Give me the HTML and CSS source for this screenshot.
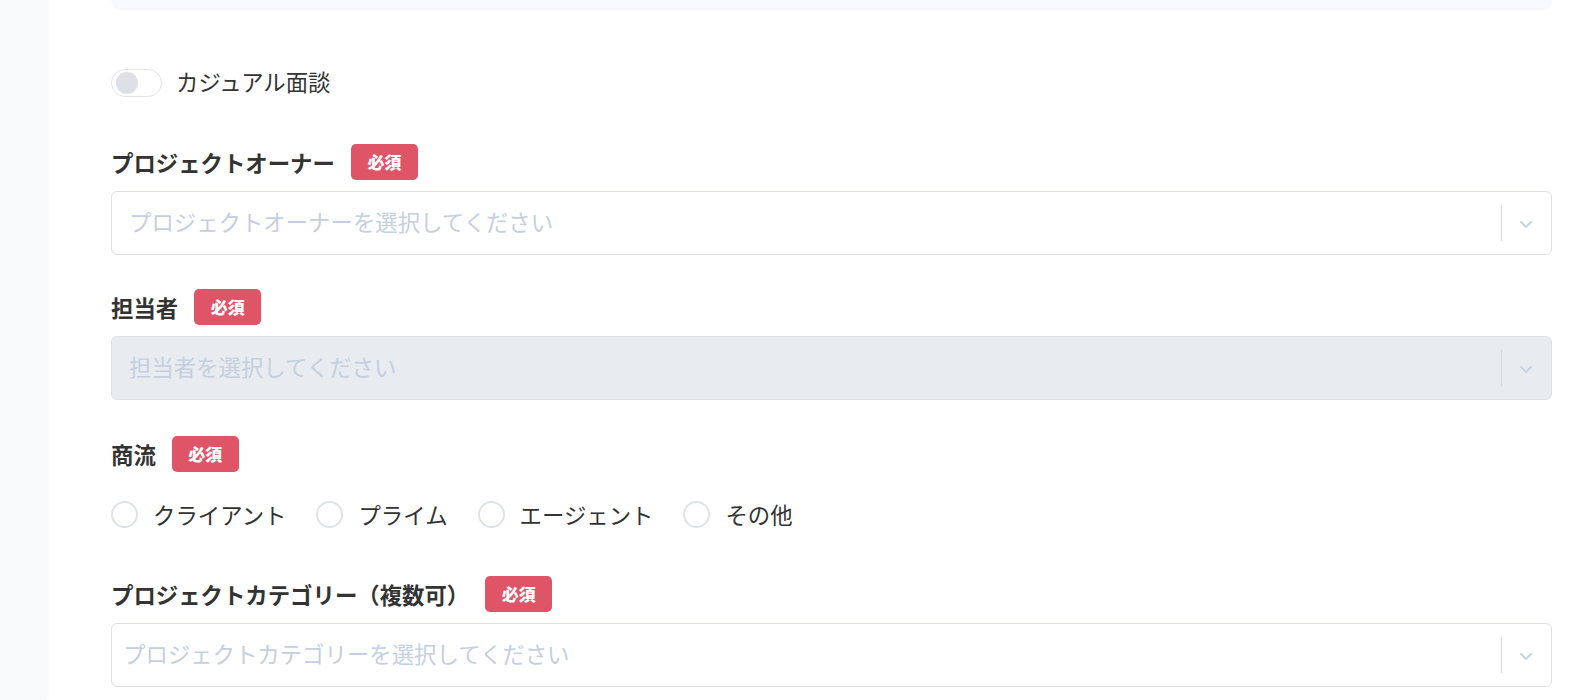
FILE: index.html
```html
<!DOCTYPE html>
<html lang="ja">
<head>
<meta charset="utf-8">
<link rel="stylesheet" href="styles.css">
</head>
<body>
<div class="layout">
  <aside class="sidebar"></aside>
  <main class="main">
    <div class="top-box"></div>

    <div class="toggle-row">
      <span class="toggle"><span class="knob"></span></span>
      <span class="toggle-label">カジュアル面談</span>
    </div>

    <div class="field field-owner">
      <div class="label-row"><span class="label">プロジェクトオーナー</span><span class="badge">必須</span></div>
      <div class="select">
        <span class="placeholder">プロジェクトオーナーを選択してください</span>
        <span class="indicator"><span class="sep"></span><svg class="chev" width="14" height="9" viewBox="0 0 14 9"><path d="M2 2l5 5 5-5" fill="none" stroke="#c9d3e1" stroke-width="2" stroke-linecap="round" stroke-linejoin="round"/></svg></span>
      </div>
    </div>

    <div class="field field-staff">
      <div class="label-row"><span class="label">担当者</span><span class="badge">必須</span></div>
      <div class="select disabled">
        <span class="placeholder">担当者を選択してください</span>
        <span class="indicator"><span class="sep"></span><svg class="chev" width="14" height="9" viewBox="0 0 14 9"><path d="M2 2l5 5 5-5" fill="none" stroke="#c9d3e1" stroke-width="2" stroke-linecap="round" stroke-linejoin="round"/></svg></span>
      </div>
    </div>

    <div class="field field-flow">
      <div class="label-row"><span class="label">商流</span><span class="badge">必須</span></div>
      <div class="radios">
        <label class="radio"><span class="circle"></span><span>クライアント</span></label>
        <label class="radio"><span class="circle"></span><span>プライム</span></label>
        <label class="radio"><span class="circle"></span><span>エージェント</span></label>
        <label class="radio"><span class="circle"></span><span>その他</span></label>
      </div>
    </div>

    <div class="field field-cat">
      <div class="label-row"><span class="label">プロジェクトカテゴリー（複数可）</span><span class="badge">必須</span></div>
      <div class="select narrow-pad">
        <span class="placeholder">プロジェクトカテゴリーを選択してください</span>
        <span class="indicator"><span class="sep"></span><svg class="chev" width="14" height="9" viewBox="0 0 14 9"><path d="M2 2l5 5 5-5" fill="none" stroke="#c9d3e1" stroke-width="2" stroke-linecap="round" stroke-linejoin="round"/></svg></span>
      </div>
    </div>
  </main>
</div>
</body>
</html>
```
FILE: styles.css
```css
* { box-sizing: border-box; }
html, body { margin: 0; padding: 0; background: #ffffff; }
body {
  font-family: "Noto Sans CJK JP", "Noto Sans", sans-serif;
  color: #333333;
  height: 700px;
  overflow: hidden;
}
.layout { display: flex; height: 700px; }
.sidebar {
  width: 47px;
  flex: none;
  background: #f8f9fb;
  box-shadow: 1px 0 3px rgba(0,0,0,0.04);
}
.main {
  flex: 1;
  padding: 0 30px 0 64px;
  display: flex;
  flex-direction: column;
}
.top-box {
  height: 10px;
  background: #f8f9fd;
  border-radius: 0 0 8px 8px;
}
.toggle-row {
  display: flex;
  align-items: center;
  gap: 14px;
  margin-top: 58px;
  height: 29px;
}
.toggle {
  width: 51px;
  height: 28px;
  border: 1px solid #e2e5ea;
  border-radius: 14px;
  display: flex;
  align-items: center;
  padding-left: 4px;
}
.knob {
  width: 22px;
  height: 22px;
  border-radius: 50%;
  background: #dde0e5;
}
.toggle-label { font-size: 22.4px; line-height: 29px; padding-bottom: 3px; }

.field { display: flex; flex-direction: column; }
.field-owner { margin-top: 47px; }
.field-staff { margin-top: 34px; }
.field-flow { margin-top: 36px; }
.field-cat { margin-top: 45px; }

.label-row {
  display: flex;
  align-items: center;
  gap: 16px;
  height: 36px;
}
.label { font-size: 22.4px; font-weight: 700; line-height: 36px; }
.badge {
  display: inline-flex;
  align-items: center;
  justify-content: center;
  width: 67px;
  height: 36px;
  border-radius: 5px;
  background: #e05468;
  color: #ffffff;
  font-size: 17px;
  font-weight: 900;
  padding-bottom: 1px;
}
.select {
  margin-top: 11px;
  height: 64px;
  border: 1px solid #dcdfe6;
  border-radius: 6px;
  display: flex;
  align-items: center;
  padding-left: 17px;
  background: #ffffff;
}
.select.narrow-pad { padding-left: 11px; }
.select.disabled { background: #e8ebef; border-color: #dde1e6; }
.placeholder {
  flex: 1;
  font-size: 22.4px;
  color: #c4cfdf;
  line-height: 30px;
  padding-bottom: 5px;
}
.indicator {
  display: flex;
  align-items: center;
  height: 100%;
}
.sep {
  width: 1px;
  height: 36px;
  background: #d5dbe5;
}
.chev { margin: 2px 18px 0 17px; }

.radios {
  display: flex;
  align-items: center;
  gap: 30px;
  margin-top: 26px;
  height: 33px;
}
.radio {
  display: flex;
  align-items: center;
  gap: 15px;
  font-size: 22.4px;
  line-height: 33px;
}
.circle {
  width: 27px;
  height: 27px;
  border-radius: 50%;
  border: 2.5px solid #dfe2e7;
  background: #ffffff;
}
```
